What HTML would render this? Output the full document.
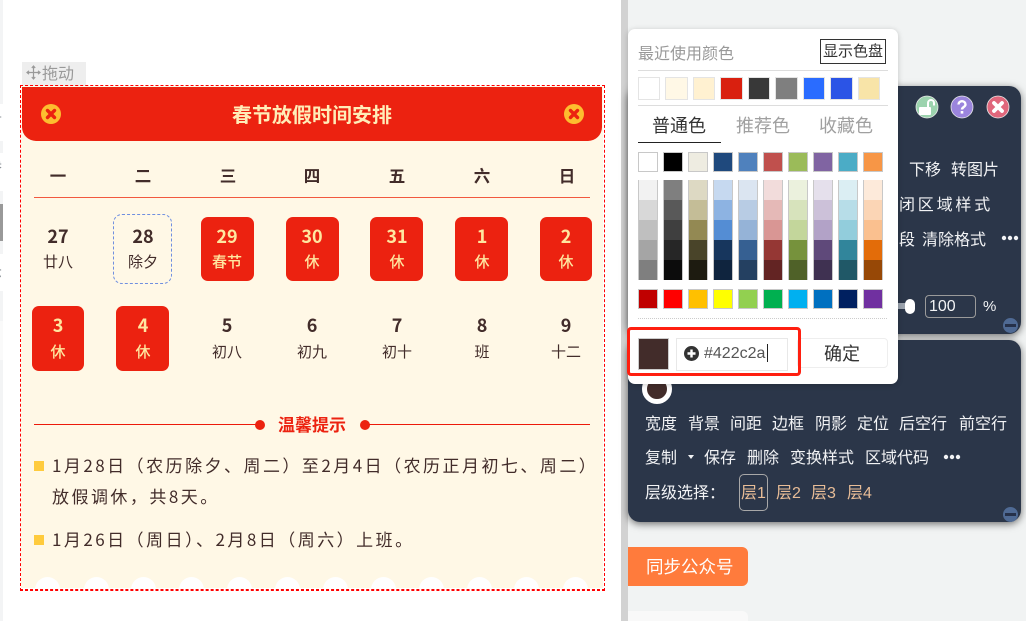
<!DOCTYPE html>
<html lang="zh"><head><meta charset="utf-8"><title>春节放假时间安排</title>
<style>
html,body{margin:0;padding:0}
body{width:1026px;height:621px;position:relative;overflow:hidden;background:#fff;font-family:"Liberation Sans","Noto Sans CJK SC",sans-serif}
.a,.t,.c{position:absolute}
.t,.c{white-space:nowrap}
.c{text-align:center;width:100px}
.card{font-family:"Noto Sans CJK SC","Liberation Sans",sans-serif;color:#422c2a}
.w{top:164px;line-height:22px;font-size:16.500px;font-weight:700}
.n{font-size:18px;font-weight:700;line-height:24px}
.s{font-size:15px;line-height:20px}
.r1{top:224px}.r1s{top:252px}.r2{top:313px}.r2s{top:342px}
.red{position:absolute;background:#ec2210;border-radius:7px}
.y{color:#ffe7a0}
.s.y{font-weight:500}
.p{font-size:17px;letter-spacing:2.470px;line-height:24px;color:#422c2a}
.sq{position:absolute;left:34px;width:10px;height:10px;background:#ffcb3d}
.b{position:absolute;width:25px;height:25px;border-radius:50%;background:#fff;top:577px}
.m{color:#f2f3f5;font-size:16px;line-height:22px}
.panel{position:absolute;background:#2b3649;border-radius:12px;left:628px;width:393px;box-shadow:0 2px 8px rgba(0,0,0,.55)}
.l{color:#e8bd97;font-size:16px;line-height:22px}
.e{position:absolute;left:-13px;font-size:15px;line-height:20px;color:#8a8f96}
</style></head><body>

<!-- left strip -->
<div class="a" style="left:0;top:0;width:3px;height:621px;background:#f3f4f5"></div>
<div class="a" style="left:0;top:104px;width:3px;height:37px;background:#fff"></div>
<div class="a" style="left:0;top:153px;width:3px;height:38px;background:#fff"></div>
<div class="a" style="left:0;top:204px;width:3px;height:37px;background:#999"></div>
<div class="a" style="left:0;top:254px;width:3px;height:37px;background:#fff"></div>
<div class="a" style="left:0;top:321px;width:3px;height:39px;background:#fafafa"></div>
<div class="e" style="top:113px">首</div>
<div class="e" style="top:157px">参</div>
<div class="e" style="top:263px">示</div>

<!-- scrollbar + right bg -->
<div class="a" style="left:621px;top:0;width:405px;height:621px;background:#f1f3f3"></div>
<div class="a" style="left:621px;top:0;width:7px;height:621px;background:#d2d2d2"></div>

<!-- drag label -->
<div class="a" style="left:22px;top:62px;width:64px;height:24px;background:#eee"></div>
<svg class="a" style="left:26px;top:65px" width="15" height="15" viewBox="0 0 15 15"><path d="M7.500 1V14M1 7.500H14M5.800 3 7.500 1 9.200 3M5.800 12 7.500 14 9.200 12M3 5.800 1 7.500 3 9.200M12 5.800 14 7.500 12 9.200" fill="none" stroke="#999" stroke-width="1.200"/></svg>
<div class="t" style="left:42px;top:61px;font:16px/22px 'Noto Sans CJK SC',sans-serif;color:#999">拖动</div>

<!-- card -->
<div class="a" style="left:20px;top:85px;width:583px;height:504px;border:1px dashed #f00;z-index:3"></div>
<div class="a" style="left:21px;top:86px;width:582px;height:502px;background:#fff8e6;overflow:hidden"></div>
<div class="card" style="position:absolute;left:0;top:0;width:620px;height:621px;overflow:hidden">
<div class="a" style="left:22px;top:87px;width:580px;height:54px;background:#ec2210;border-radius:0 0 14px 14px"></div>
<svg class="a" style="left:41px;top:104px" width="20" height="20" viewBox="0 0 20 20"><circle cx="10" cy="10" r="10" fill="#fdbd2f"/><path d="M6.500 6.500 13.500 13.500M13.500 6.500 6.500 13.500" stroke="#ec2210" stroke-width="3.400" stroke-linecap="round"/></svg>
<svg class="a" style="left:564px;top:104px" width="20" height="20" viewBox="0 0 20 20"><circle cx="10" cy="10" r="10" fill="#fdbd2f"/><path d="M6.500 6.500 13.500 13.500M13.500 6.500 6.500 13.500" stroke="#ec2210" stroke-width="3.400" stroke-linecap="round"/></svg>
<div class="c" style="left:162px;width:300px;top:100px;font-size:20px;font-weight:700;line-height:28px;color:#ffedb8">春节放假时间安排</div>

<div class="c w" style="left:8px">一</div><div class="c w" style="left:93px">二</div><div class="c w" style="left:178px">三</div><div class="c w" style="left:262px">四</div><div class="c w" style="left:347px">五</div><div class="c w" style="left:432px">六</div><div class="c w" style="left:517px">日</div>
<div class="a" style="left:34px;top:197px;width:556px;height:1px;background:#f2583f"></div>

<div class="a" style="left:113px;top:214px;width:57px;height:68px;border:1px dashed #6f8fe0;border-radius:9px"></div>
<div class="red" style="left:201px;top:217px;width:53px;height:64px"></div>
<div class="red" style="left:286px;top:217px;width:53px;height:64px"></div>
<div class="red" style="left:370px;top:217px;width:53px;height:64px"></div>
<div class="red" style="left:455px;top:217px;width:53px;height:64px"></div>
<div class="red" style="left:540px;top:217px;width:52px;height:64px"></div>
<div class="red" style="left:32px;top:306px;width:52px;height:65px"></div>
<div class="red" style="left:116px;top:306px;width:53px;height:65px"></div>

<div class="c n r1" style="left:8px">27</div><div class="c s r1s" style="left:8px">廿八</div>
<div class="c n r1" style="left:93px">28</div><div class="c s r1s" style="left:93px">除夕</div>
<div class="c n r1 y" style="left:177px">29</div><div class="c s r1s y" style="left:177px">春节</div>
<div class="c n r1 y" style="left:262px">30</div><div class="c s r1s y" style="left:262px">休</div>
<div class="c n r1 y" style="left:347px">31</div><div class="c s r1s y" style="left:347px">休</div>
<div class="c n r1 y" style="left:432px">1</div><div class="c s r1s y" style="left:432px">休</div>
<div class="c n r1 y" style="left:516px">2</div><div class="c s r1s y" style="left:516px">休</div>

<div class="c n r2 y" style="left:8px">3</div><div class="c s r2s y" style="left:8px">休</div>
<div class="c n r2 y" style="left:93px">4</div><div class="c s r2s y" style="left:93px">休</div>
<div class="c n r2" style="left:177px">5</div><div class="c s r2s" style="left:177px">初八</div>
<div class="c n r2" style="left:262px">6</div><div class="c s r2s" style="left:262px">初九</div>
<div class="c n r2" style="left:347px">7</div><div class="c s r2s" style="left:347px">初十</div>
<div class="c n r2" style="left:432px">8</div><div class="c s r2s" style="left:432px">班</div>
<div class="c n r2" style="left:516px">9</div><div class="c s r2s" style="left:516px">十二</div>

<div class="a" style="left:34px;top:424px;width:222px;height:1px;background:#ec1a0a"></div>
<div class="a" style="left:255px;top:420px;width:10px;height:10px;border-radius:50%;background:#ec2210"></div>
<div class="c" style="left:262px;top:412px;font-size:17px;font-weight:700;line-height:24px;color:#ec2210">温馨提示</div>
<div class="a" style="left:360px;top:420px;width:10px;height:10px;border-radius:50%;background:#ec2210"></div>
<div class="a" style="left:369px;top:424px;width:221px;height:1px;background:#ec1a0a"></div>

<div class="sq" style="top:461px"></div>
<div class="t p" style="left:52px;top:453px">1月28日（农历除夕、周二）至2月4日（农历正月初七、周二）</div>
<div class="t p" style="left:52px;top:484px">放假调休，共8天。</div>
<div class="sq" style="top:535px"></div>
<div class="t p" style="left:52px;top:527px">1月26日（周日）、2月8日（周六）上班。</div>

<div class="b" style="left:35px"></div><div class="b" style="left:84px"></div><div class="b" style="left:131px"></div><div class="b" style="left:179px"></div><div class="b" style="left:227px"></div><div class="b" style="left:275px"></div><div class="b" style="left:323px"></div><div class="b" style="left:371px"></div><div class="b" style="left:419px"></div><div class="b" style="left:467px"></div><div class="b" style="left:514px"></div><div class="b" style="left:563px"></div>
<div class="a" style="left:21px;top:588px;width:582px;height:33px;background:#fff"></div>
<div class="a" style="left:20px;top:589px;width:585px;height:0;border-top:1px dashed #f00"></div>
</div>

<!-- dark panels -->
<div class="panel" style="top:86px;height:248px"></div>
<div class="panel" style="top:340px;height:182px"></div>

<svg class="a" style="left:915px;top:95px" width="24" height="24" viewBox="0 0 24 24"><circle cx="12" cy="12" r="11" fill="#9cd3ae" stroke="#e8e8e8" stroke-width=".8"/><rect x="4" y="12" width="12" height="8" rx="1" fill="#fff"/><path d="M13 12V8A3 3 0 0 1 19 8V10.500" fill="none" stroke="#fff" stroke-width="2"/></svg>
<svg class="a" style="left:950px;top:95px" width="24" height="24" viewBox="0 0 24 24"><circle cx="12" cy="12" r="11" fill="#9b85dd" stroke="#e8e8e8" stroke-width=".8"/><path d="M8.500 9.500A3.500 3.300 0 0 1 15.500 9.500C15.500 12 12 12 12 14.500" fill="none" stroke="#fff" stroke-width="2.400"/><rect x="10.700" y="16" width="2.600" height="2.600" fill="#fff"/></svg>
<svg class="a" style="left:986px;top:95px" width="24" height="24" viewBox="0 0 24 24"><circle cx="12" cy="12" r="11" fill="#e0677c" stroke="#e8e8e8" stroke-width=".8"/><path d="M8 8 16 16M16 8 8 16" stroke="#fff" stroke-width="3.800" stroke-linecap="round"/></svg>

<div class="t m" style="left:909px;top:160px">下移</div>
<div class="t m" style="left:951px;top:160px">转图片</div>
<div class="t m" style="left:899px;top:195px;letter-spacing:2.800px">闭区域样式</div>
<div class="t m" style="left:899px;top:230px">段</div>
<div class="t m" style="left:922px;top:230px">清除格式</div>
<svg class="a" style="left:1001px;top:235px" width="18" height="6"><circle cx="3" cy="3" r="2.200" fill="#f2f3f5"/><circle cx="9" cy="3" r="2.200" fill="#f2f3f5"/><circle cx="15" cy="3" r="2.200" fill="#f2f3f5"/></svg>
<div class="a" style="left:898px;top:303px;width:10px;height:6px;background:#9aa2ad"></div>
<div class="a" style="left:905px;top:299px;width:10px;height:15px;border-radius:5px;background:#fff"></div>
<div class="a" style="left:925px;top:295px;width:49px;height:21px;border:1px solid #9a9a9a;border-radius:4px"></div>
<div class="t" style="left:929px;top:296px;font-size:16px;line-height:21px;color:#f2f3f5">100</div>
<div class="t" style="left:983px;top:296px;font-size:15px;line-height:21px;color:#f2f3f5">%</div>
<div class="a" style="left:1003px;top:318px;width:15px;height:15px;border-radius:50%;background:#4f6a94"></div>
<div class="a" style="left:1005px;top:324px;width:11px;height:3px;background:#26314a"></div>

<div class="a" style="left:642px;top:374px;width:20px;height:20px;border:5px solid #fff;border-radius:50%;background:#422c2a"></div>
<div class="t m" style="left:645px;top:414px">宽度</div>
<div class="t m" style="left:688px;top:414px">背景</div>
<div class="t m" style="left:730px;top:414px">间距</div>
<div class="t m" style="left:772px;top:414px">边框</div>
<div class="t m" style="left:815px;top:414px">阴影</div>
<div class="t m" style="left:857px;top:414px">定位</div>
<div class="t m" style="left:899px;top:414px">后空行</div>
<div class="t m" style="left:959px;top:414px">前空行</div>
<div class="t m" style="left:645px;top:448px">复制</div>
<div class="a" style="left:688px;top:455px;width:0;height:0;border:3px solid transparent;border-top:4px solid #f2f3f5"></div>
<div class="t m" style="left:704px;top:448px">保存</div>
<div class="t m" style="left:747px;top:448px">删除</div>
<div class="t m" style="left:790px;top:448px">变换样式</div>
<div class="t m" style="left:865px;top:448px">区域代码</div>
<svg class="a" style="left:943px;top:454px" width="18" height="6"><circle cx="3" cy="3" r="2.200" fill="#f2f3f5"/><circle cx="9" cy="3" r="2.200" fill="#f2f3f5"/><circle cx="15" cy="3" r="2.200" fill="#f2f3f5"/></svg>
<div class="t m" style="left:645px;top:483px">层级选择：</div>
<div class="a" style="left:739px;top:474px;width:27px;height:35px;border:1px solid #a8a8a8;border-radius:5px"></div>
<div class="t l" style="left:741px;top:483px">层1</div>
<div class="t l" style="left:776px;top:483px">层2</div>
<div class="t l" style="left:811px;top:483px">层3</div>
<div class="t l" style="left:847px;top:483px">层4</div>
<div class="a" style="left:1003px;top:507px;width:15px;height:15px;border-radius:50%;background:#4f6a94"></div>
<div class="a" style="left:1005px;top:513px;width:11px;height:3px;background:#26314a"></div>

<!-- buttons -->
<div class="a" style="left:628px;top:547px;width:120px;height:39px;background:#ff7b3c;border-radius:0 6px 6px 0"></div>
<div class="t" style="left:646px;top:554px;font-size:17.500px;line-height:26px;color:#fff">同步公众号</div>
<div class="a" style="left:628px;top:611px;width:120px;height:10px;background:#f9f9f9;border-radius:0 6px 0 0"></div>

<!-- colour popup -->
<div class="a" style="left:628px;top:29px;width:270px;height:355px;background:#fff;border-radius:7px;box-shadow:0 1px 6px rgba(0,0,0,.2)"></div>
<div class="t" style="left:638px;top:44px;font-size:16px;line-height:22px;color:#999">最近使用颜色</div>
<div class="a" style="left:820px;top:39px;width:64px;height:23px;border:1px solid #333;text-align:center;font-size:15px;line-height:23px;color:#333">显示色盘</div>
<div class="a" style="left:638px;top:70px;width:250px;height:1px;background:#ddd"></div>
<div class="a" style="left:638px;top:105px;width:250px;height:1px;background:#ddd"></div>

<svg class="a" style="left:628px;top:70px" width="270" height="250" viewBox="628 70 270 250">
<g stroke="#e4e4e4" stroke-width="1">
<rect x="638.500" y="77.500" width="21" height="22" fill="#fff"/><rect x="665.500" y="77.500" width="22" height="22" fill="#fff8e6"/><rect x="693.500" y="77.500" width="21" height="22" fill="#fff1d1"/><rect x="720.500" y="77.500" width="22" height="22" fill="#d9200f"/><rect x="748.500" y="77.500" width="21" height="22" fill="#383838"/><rect x="775.500" y="77.500" width="22" height="22" fill="#7f7f7f"/><rect x="803.500" y="77.500" width="21" height="22" fill="#2a6cff"/><rect x="830.500" y="77.500" width="22" height="22" fill="#2b54e6"/><rect x="858.500" y="77.500" width="21" height="22" fill="#f8e4a8"/>
</g>
<g stroke="#c8c8c8" stroke-width="1">
<rect x="638.500" y="152.500" width="19" height="19" fill="#fff"/><rect x="663.500" y="152.500" width="19" height="19" fill="#000"/><rect x="688.500" y="152.500" width="19" height="19" fill="#eeece1"/><rect x="713.500" y="152.500" width="19" height="19" fill="#1f497d"/><rect x="738.500" y="152.500" width="19" height="19" fill="#4f81bd"/><rect x="763.500" y="152.500" width="19" height="19" fill="#c0504d"/><rect x="788.500" y="152.500" width="19" height="19" fill="#9bbb59"/><rect x="813.500" y="152.500" width="19" height="19" fill="#8064a2"/><rect x="838.500" y="152.500" width="19" height="19" fill="#4bacc6"/><rect x="863.500" y="152.500" width="19" height="19" fill="#f79646"/>
<rect x="638.500" y="289.500" width="19" height="19" fill="#c00000"/><rect x="663.500" y="289.500" width="19" height="19" fill="#f00"/><rect x="688.500" y="289.500" width="19" height="19" fill="#ffc000"/><rect x="713.500" y="289.500" width="19" height="19" fill="#ff0"/><rect x="738.500" y="289.500" width="19" height="19" fill="#92d050"/><rect x="763.500" y="289.500" width="19" height="19" fill="#00b050"/><rect x="788.500" y="289.500" width="19" height="19" fill="#00b0f0"/><rect x="813.500" y="289.500" width="19" height="19" fill="#0070c0"/><rect x="838.500" y="289.500" width="19" height="19" fill="#002060"/><rect x="863.500" y="289.500" width="19" height="19" fill="#7030a0"/>
</g>
<g>
<rect x="638" y="180" width="20" height="20" fill="#f2f2f2"/><rect x="638" y="200" width="20" height="20" fill="#d8d8d8"/><rect x="638" y="220" width="20" height="20" fill="#bfbfbf"/><rect x="638" y="240" width="20" height="20" fill="#a5a5a5"/><rect x="638" y="260" width="20" height="20" fill="#7f7f7f"/>
<rect x="663" y="180" width="20" height="20" fill="#7f7f7f"/><rect x="663" y="200" width="20" height="20" fill="#595959"/><rect x="663" y="220" width="20" height="20" fill="#3f3f3f"/><rect x="663" y="240" width="20" height="20" fill="#262626"/><rect x="663" y="260" width="20" height="20" fill="#0c0c0c"/>
<rect x="688" y="180" width="20" height="20" fill="#ddd9c3"/><rect x="688" y="200" width="20" height="20" fill="#c4bd97"/><rect x="688" y="220" width="20" height="20" fill="#938953"/><rect x="688" y="240" width="20" height="20" fill="#494429"/><rect x="688" y="260" width="20" height="20" fill="#1d1b10"/>
<rect x="713" y="180" width="20" height="20" fill="#c6d9f0"/><rect x="713" y="200" width="20" height="20" fill="#8db3e2"/><rect x="713" y="220" width="20" height="20" fill="#548dd4"/><rect x="713" y="240" width="20" height="20" fill="#17365d"/><rect x="713" y="260" width="20" height="20" fill="#0f243e"/>
<rect x="738" y="180" width="20" height="20" fill="#dbe5f1"/><rect x="738" y="200" width="20" height="20" fill="#b8cce4"/><rect x="738" y="220" width="20" height="20" fill="#95b3d7"/><rect x="738" y="240" width="20" height="20" fill="#366092"/><rect x="738" y="260" width="20" height="20" fill="#244061"/>
<rect x="763" y="180" width="20" height="20" fill="#f2dcdb"/><rect x="763" y="200" width="20" height="20" fill="#e5b9b7"/><rect x="763" y="220" width="20" height="20" fill="#d99694"/><rect x="763" y="240" width="20" height="20" fill="#953734"/><rect x="763" y="260" width="20" height="20" fill="#632423"/>
<rect x="788" y="180" width="20" height="20" fill="#ebf1dd"/><rect x="788" y="200" width="20" height="20" fill="#d7e3bc"/><rect x="788" y="220" width="20" height="20" fill="#c3d69b"/><rect x="788" y="240" width="20" height="20" fill="#76923c"/><rect x="788" y="260" width="20" height="20" fill="#4f6128"/>
<rect x="813" y="180" width="20" height="20" fill="#e5e0ec"/><rect x="813" y="200" width="20" height="20" fill="#ccc1d9"/><rect x="813" y="220" width="20" height="20" fill="#b2a2c7"/><rect x="813" y="240" width="20" height="20" fill="#5f497a"/><rect x="813" y="260" width="20" height="20" fill="#3f3151"/>
<rect x="838" y="180" width="20" height="20" fill="#dbeef3"/><rect x="838" y="200" width="20" height="20" fill="#b7dde8"/><rect x="838" y="220" width="20" height="20" fill="#92cddc"/><rect x="838" y="240" width="20" height="20" fill="#31859b"/><rect x="838" y="260" width="20" height="20" fill="#205867"/>
<rect x="863" y="180" width="20" height="20" fill="#fdeada"/><rect x="863" y="200" width="20" height="20" fill="#fbd5b5"/><rect x="863" y="220" width="20" height="20" fill="#fac08f"/><rect x="863" y="240" width="20" height="20" fill="#e36c09"/><rect x="863" y="260" width="20" height="20" fill="#974806"/>
</g>
<g fill="none" stroke="#c8c8c8"><path d="M638.500 180V280M657.500 180V280M663.500 180V280M682.500 180V280M688.500 180V280M707.500 180V280M713.500 180V280M732.500 180V280M738.500 180V280M757.500 180V280M763.500 180V280M782.500 180V280M788.500 180V280M807.500 180V280M813.500 180V280M832.500 180V280M838.500 180V280M857.500 180V280M863.500 180V280M882.500 180V280"/></g>
<path d="M638 318.500H888" stroke="#ccc" stroke-dasharray="1 1"/>
</svg>

<div class="c" style="left:629px;top:113px;font-size:18px;line-height:26px;color:#333">普通色</div>
<div class="c" style="left:713px;top:113px;font-size:18px;line-height:26px;color:#a0a0a0">推荐色</div>
<div class="c" style="left:796px;top:113px;font-size:18px;line-height:26px;color:#a0a0a0">收藏色</div>
<div class="a" style="left:638px;top:142px;width:83px;height:1px;background:#222"></div>

<div class="a" style="left:638px;top:338px;width:29px;height:30px;background:#422c2a;border:1px solid #ccc"></div>
<div class="a" style="left:676px;top:338px;width:110px;height:31px;border:1px solid #e8e8e8;background:#fff"></div>
<svg class="a" style="left:684px;top:346px" width="15" height="15" viewBox="0 0 15 15"><circle cx="7.500" cy="7.500" r="7.500" fill="#333"/><path d="M7.500 3.500V11.500M3.500 7.500H11.500" stroke="#fff" stroke-width="2.400"/></svg>
<div class="t" style="left:704px;top:342px;font-size:16px;line-height:23px;color:#555">#422c2a</div>
<div class="a" style="left:767px;top:344px;width:1px;height:18px;background:#222"></div>
<div class="a" style="left:797px;top:338px;width:89px;height:28px;border:1px solid #eee;border-radius:4px;background:#fff"></div>
<div class="c" style="left:792px;top:342px;font-size:18px;line-height:24px;color:#333">确定</div>
<div class="a" style="left:627px;top:327px;width:168px;height:43px;border:3px solid #ff1f10;border-radius:4px"></div>

</body></html>
